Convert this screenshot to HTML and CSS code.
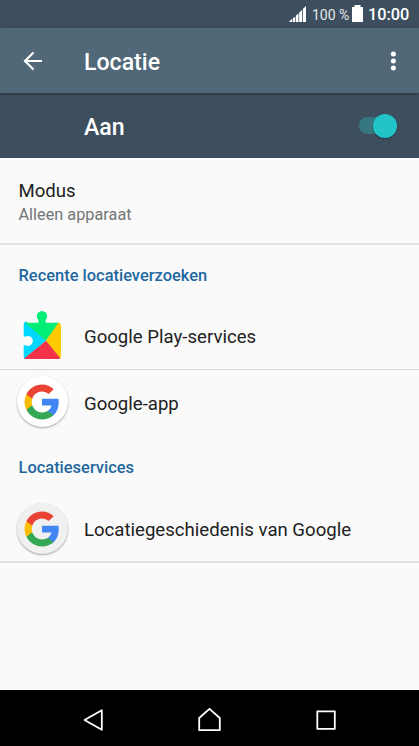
FILE: index.html
```html
<!DOCTYPE html>
<html lang="nl">
<head>
<meta charset="utf-8">
<title>Locatie</title>
<link rel="stylesheet" href="styles.css">
</head>
<body>
<svg width="0" height="0" class="defs">
  <symbol id="g" viewBox="0 0 24 24">
    <path fill="#4285f4" d="M22.56 12.25c0-.78-.07-1.53-.2-2.25H12v4.26h5.92c-.26 1.37-1.04 2.53-2.21 3.31v2.77h3.57c2.08-1.92 3.28-4.74 3.28-8.09z"/>
    <path fill="#34a853" d="M12 23c2.97 0 5.46-.98 7.28-2.66l-3.57-2.77c-.98.66-2.23 1.06-3.71 1.06-2.86 0-5.29-1.93-6.16-4.53H2.18v2.84C3.99 20.53 7.7 23 12 23z"/>
    <path fill="#fbbc05" d="M5.84 14.09c-.22-.66-.35-1.36-.35-2.09s.13-1.43.35-2.09V7.07H2.18C1.43 8.55 1 10.22 1 12s.43 3.45 1.18 4.93l3.66-2.84z"/>
    <path fill="#ea4335" d="M12 5.38c1.62 0 3.06.56 4.21 1.64l3.15-3.15C17.45 2.09 14.97 1 12 1 7.7 1 3.99 3.47 2.18 7.07l3.66 2.84c.87-2.6 3.3-4.53 6.16-4.53z"/>
  </symbol>
</svg>
<div class="screen">
  <div class="status">
    <svg class="signal" width="18" height="16" viewBox="0 0 18 16"><path fill="#fff" d="M.5 16v-1l2.600-2v3zM3.800 16v-3.500l2.500-2V16zM7 16V9.500l2.500-2V16zM10.200 16V6.500l2.800-2.500V16zM13.800 16V3L17 0v16z"/></svg>
    <span class="percent">100 %</span>
    <svg class="battery" width="11" height="17" viewBox="0 0 11 17"><path fill="#fff" d="M2.500 0h6v2H11v15H0V2h2.500z"/></svg>
    <span class="clock">10:00</span>
  </div>
  <header class="toolbar">
    <svg class="back" width="20" height="20" viewBox="0 0 20 20"><path d="M19 10H2M10.500 1.500L2 10l8.500 8.500" fill="none" stroke="#fff" stroke-width="2.200"/></svg>
    <h1>Locatie</h1>
    <svg class="more" width="6" height="20" viewBox="0 0 6 20" fill="#fff"><circle cx="3.400" cy="3" r="2.500"/><circle cx="3.400" cy="10" r="2.500"/><circle cx="3.400" cy="17" r="2.500"/></svg>
  </header>
  <div class="switchbar">
    <span>Aan</span>
    <div class="track"><div class="thumb"></div></div>
  </div>
  <main>
    <div class="mode"><div class="title">Modus</div><div class="sub">Alleen apparaat</div></div>
    <h2>Recente locatieverzoeken</h2>
    <div class="row play">
      <svg width="52" height="56" viewBox="0 3 52 56">
        <path fill="#00d9ff" d="M10 15.500L30 34.500 8.500 53Q7.700 52.500 7.700 51V39.300H9.500A5 5 0 1 0 9.500 30.500H7.700V18.500Q7.700 16 10 15.500z"/>
        <path fill="#00ee76" d="M10 16.700h12.400V14A5.200 5.200 0 1 1 29.600 14V16.700H43.500L30 34.700 9.300 16.900z"/>
        <path fill="#ffcb00" d="M42.400 16.700q2.600.3 2.600 2.500V50q0 1.800-1.200 2.500L30 34.700z"/>
        <path fill="#f43249" d="M30 34.700L44.300 52.300q-.8.700-2 .7H10q-1 0-1.800-.6z"/>
      </svg>
      <span>Google Play-services</span>
    </div>
    <div class="row app">
      <div class="disc white"><svg width="38" height="38"><use href="#g"/></svg></div>
      <span>Google-app</span>
    </div>
    <h2 class="services">Locatieservices</h2>
    <div class="row history">
      <div class="disc"><svg width="38" height="38"><use href="#g"/></svg></div>
      <span>Locatiegeschiedenis van Google</span>
    </div>
  </main>
  <nav>
    <svg width="24" height="26" viewBox="0 0 24 26"><path d="M20.800 3.300v19.500L3.500 13z"/></svg>
    <svg width="26" height="26" viewBox="0 0 26 26"><path d="M12.500 1.800L22.800 11V23.200H2.200V11z"/></svg>
    <svg width="24" height="26" viewBox="0 0 24 26"><path d="M3.300 4.300h17.500v17.500H3.300z"/></svg>
  </nav>
</div>
</body>
</html>
```
FILE: styles.css
```css
* { box-sizing: border-box; }
body { margin: 0; font-family: Roboto, sans-serif; color: #212121; }
svg { display: block; flex: none; }
.defs { position: absolute; }
.screen { width: 419px; height: 746px; display: flex; flex-direction: column; background: #fafafa; overflow: hidden; white-space: nowrap; }
.status { height: 28px; flex: none; background: #3d4f5e; color: #fff; display: flex; align-items: center; padding-left: 289px; }
.percent { font-size: 14px; width: 37px; margin-left: 5px; padding-top: 1px; color: #e6e9eb; }
.battery { margin-left: 3px; margin-top: -1px; }
.clock { font-size: 16.3px; font-weight: 500; margin-left: 5px; }
.toolbar { height: 65px; flex: none; background: #516878; display: flex; align-items: center; padding: 1px 23px 0; box-shadow: 0 1px 3px rgba(0,0,0,.4); z-index: 1; }
h1 { margin: 0 auto 0 41px; font-size: 23.1px; font-weight: 500; color: #fff; }
.toolbar h1 { line-height: 28px; padding-top: 3px; }
.switchbar { height: 65px; flex: none; background: #3d4f5e; color: #fff; display: flex; align-items: center; justify-content: space-between; padding: 2px 22.5px 0 84px; font-size: 23.1px; font-weight: 500; }
.switchbar span { padding-top: 2px; }
.track { width: 38px; height: 17px; border-radius: 9px; background: #367782; display: flex; align-items: center; justify-content: flex-end; margin-top: -2px; }
.thumb { width: 24px; height: 24px; flex: none; border-radius: 50%; background: #22c4ca; box-shadow: 0 1px 2px rgba(0,0,0,.35); }
main { flex: 1; }
.mode { height: 87px; padding: 21px 18.5px 0; border-bottom: 2px solid #e2e2e2; }
.title { font-size: 18.6px; line-height: 24px; }
.sub { font-size: 16.3px; line-height: 24px; color: #757575; }
h2 { margin: 0; height: 60px; padding: 20px 18.5px 0; font-size: 16.45px; line-height: 22px; font-weight: 500; color: #1e689f; }
.row { display: flex; align-items: center; padding-left: 16px; font-size: 18.6px; }
.row span { margin-left: 16px; padding-top: 2px; }
.play { height: 65px; border-bottom: 1px solid #dadada; }
.row.play span { padding-top: 0; }
.app { height: 66px; }
.services { height: 61px; padding-top: 21px; }
.history { height: 66px; border-bottom: 2px solid #e2e2e2; }
.disc { width: 51px; height: 51px; margin: 0 .3px 1px .7px; flex: none; border-radius: 50%; background: #f0f0f0; box-shadow: 0 1px 2px rgba(0,0,0,.35); display: flex; align-items: center; justify-content: center; }
.disc.white { background: #fff; margin-bottom: 3px; }
nav { height: 56px; flex: none; background: #000; display: flex; align-items: center; justify-content: space-between; padding: 3px 81px 0; }
nav path { fill: none; stroke: #fff; stroke-width: 1.8; stroke-linejoin: round; }
```
